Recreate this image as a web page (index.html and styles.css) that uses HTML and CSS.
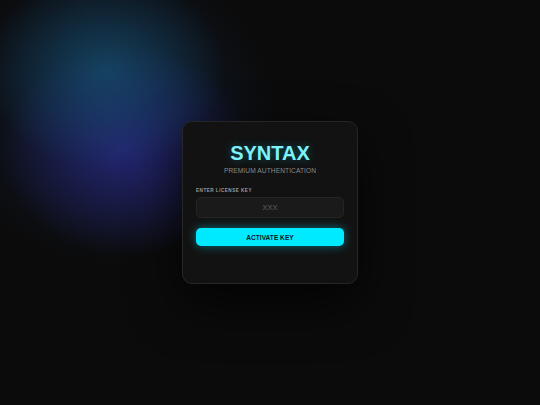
FILE: index.html
```
<!DOCTYPE html>
<html lang="en">
<head>
<meta charset="utf-8">
<title>Syntax</title>
<link rel="stylesheet" href="styles.css">
</head>
<body>
<main class="card">
  <h1 class="title">SYNTAX</h1>
  <p class="subtitle">PREMIUM AUTHENTICATION</p>
  <label class="label" for="key">ENTER LICENSE KEY</label>
  <input class="input" id="key" type="text" placeholder="XXX">
  <button class="btn" type="button">ACTIVATE KEY</button>
</main>
</body>
</html>
```
FILE: styles.css
```
html, body {
  margin: 0;
  height: 100%;
}
body {
  font-family: "Liberation Sans", Arial, sans-serif;
  background:
    radial-gradient(ellipse 120px 100px at 105px 70px, rgba(22, 82, 115, 0.7), rgba(22, 82, 115, 0) 100%),
    radial-gradient(ellipse 125px 105px at 125px 150px, rgba(42, 40, 135, 0.75), rgba(42, 40, 135, 0) 100%),
    radial-gradient(ellipse 165px 155px at 110px 110px, rgba(20, 40, 80, 0.6), rgba(20, 40, 80, 0) 100%),
    #0b0b0b;
  display: flex;
  align-items: center;
  justify-content: center;
  overflow: hidden;
}
.card {
  box-sizing: border-box;
  width: 176px;
  height: 163px;
  padding: 18px 13px 0;
  background: #121212;
  border: 1px solid #262626;
  border-radius: 10px;
  box-shadow: 0 20px 50px rgba(0, 0, 0, 0.7);
  display: flex;
  flex-direction: column;
}
.title {
  margin: 0;
  font-size: 20px;
  line-height: 26px;
  font-weight: 700;
  text-align: center;
  color: #7ef2fa;
  text-shadow: 0 0 8px rgba(0, 229, 255, 0.35);
}
.subtitle {
  margin: 1px 0 0;
  font-size: 6.6px;
  line-height: 8px;
  letter-spacing: 0.1px;
  text-align: center;
  color: #8a8a8a;
}
.label {
  margin-top: 13px;
  font-size: 4.6px;
  line-height: 6px;
  font-weight: 700;
  letter-spacing: 0.5px;
  color: #9a9a9a;
}
.input {
  box-sizing: border-box;
  margin-top: 3px;
  width: 100%;
  height: 21px;
  background: #1a1a1a;
  border: 1px solid #252525;
  border-radius: 5px;
  font-family: inherit;
  font-size: 7.5px;
  text-align: center;
  color: #ddd;
  outline: none;
  padding: 0;
}
.input::placeholder {
  color: #606060;
}
.btn {
  margin-top: 10px;
  width: 100%;
  height: 18px;
  border: 0;
  border-radius: 5px;
  background: #00eaff;
  box-shadow: 0 0 10px rgba(0, 234, 255, 0.45);
  font-family: inherit;
  font-size: 6.6px;
  font-weight: 700;
  color: #071518;
  padding: 0;
}
```
